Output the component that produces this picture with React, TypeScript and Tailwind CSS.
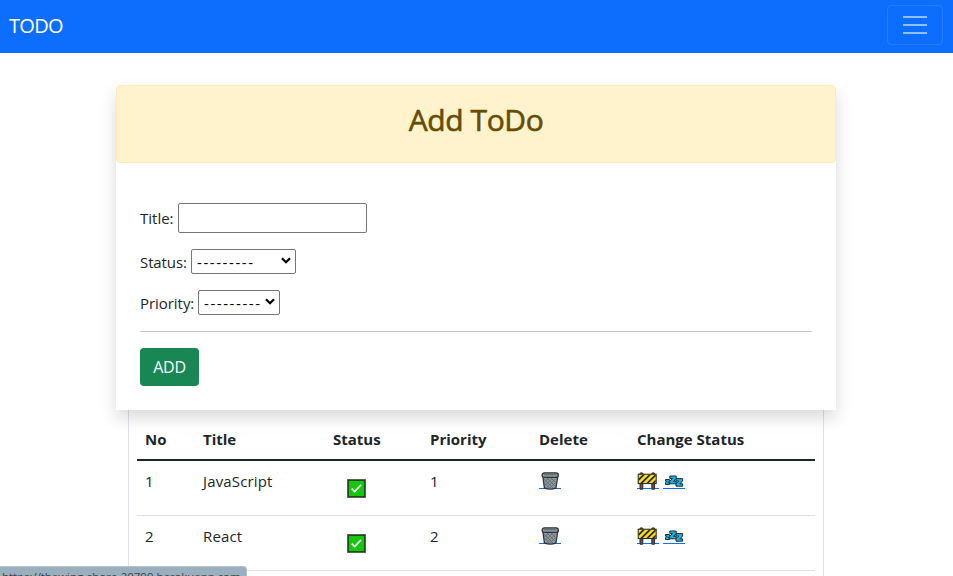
import React from 'react';

const todos = [
  { no: 1, title: 'JavaScript', priority: 1 },
  { no: 2, title: 'React', priority: 2 },
];

function CheckIcon() {
  return (
    <svg width="19" height="19" viewBox="0 0 19 19" className="block">
      <rect x="0.5" y="0.5" width="18" height="18" fill="#16c60c" stroke="#777" />
      <rect x="1.25" y="1.25" width="16.5" height="16.5" fill="none" stroke="#173d14" strokeWidth="1.2" />
      <path d="M4.7 9.7 7.6 12.5 14.2 5.7" fill="none" stroke="#fff" strokeWidth="1.6" />
    </svg>
  );
}

function BinIcon() {
  return (
    <svg width="22" height="20" viewBox="0 0 22 20" className="block">
      <path d="M0 16.5H22" stroke="#0d6efd" />
      <path d="M3.8 4 5.4 15.8Q11.3 18.6 17 15.8L18.8 4Z" fill="#8d9ba1" stroke="#333" strokeWidth="1.3" />
      <path d="m5 7 9 9M8 6l8 8M12 6l4.5 4.5M5.5 11l5 5M16.5 7l-9 9M13.5 6 6 13.5M9.5 6 5.5 10M16 11l-5 5" stroke="#59666c" strokeWidth="0.8" />
      <rect x="3.1" y="0.8" width="16.2" height="4.6" rx="2.2" fill="#8d9ba1" stroke="#333" strokeWidth="1.3" />
      <path d="M5 2.6H17.4" stroke="#65747b" strokeWidth="1.3" />
    </svg>
  );
}

function BarrierIcon() {
  return (
    <svg width="22" height="20" viewBox="0 0 22 20" className="block">
      <path d="M0 16.5H22" stroke="#0d6efd" />
      <path d="M3 1.2h2.8v16H3zM14.8 1.2h2.8v16h-2.8z" fill="#5a5052" stroke="#332d2f" />
      <path d="M3.6 .8h1.6M15.4 .8H17" stroke="#a93b32" strokeWidth="1.2" />
      <rect x="1.2" y="2.2" width="18" height="9.4" fill="#f8e018" stroke="#222" />
      <path d="m1.7 6.5 3.8-3.8H8L1.7 9zM3.3 11.1l8.4-8.4h2.5l-8.4 8.4zM9.3 11.1l8.4-8.4h1v1.5l-6.9 6.9zM15.1 11.1l3.6-3.6V10l-1.1 1.1z" fill="#292818" />
    </svg>
  );
}

function SleepIcon() {
  return (
    <svg width="22" height="20" viewBox="0 0 22 20" className="block">
      <path d="M0 16.5H22" stroke="#0d6efd" />
      <g fill="#10b5ea" stroke="#252b2e" strokeWidth="1">
        <path d="M2.5 7.5h4v1.7L5 10.8h1.5v1.7h-4v-1.7L4 9.2H2.5z" />
        <path d="M6.8 4h6.4v2.4L10.6 9.4h2.6v2.4H6.8V9.4l2.6-3H6.8z" />
        <path d="M13 6.6h6.6V9l-2.7 2.8h2.7v2.4H13v-2.4L15.7 9H13z" />
      </g>
    </svg>
  );
}

function Chevron() {
  return (
    <svg width="10" height="7" viewBox="0 0 10 7" className="mb-[2px] block">
      <path d="m1 1.2 4 4 4-4" fill="none" stroke="#000" strokeWidth="2.2" />
    </svg>
  );
}

function Picker({ className }: { className: string }) {
  return (
    <button className={`flex h-[25px] items-center justify-between rounded-[2px] border border-[#767676] bg-white pr-[4px] pl-[5px] text-black ${className}`}>
      <span className="pt-[2px] text-[15px] leading-none tracking-[1.57px]">---------</span>
      <Chevron />
    </button>
  );
}

export default function App() {
  return (
    <div className="relative flex h-[576px] w-[953px] flex-col overflow-hidden bg-white font-['Open_Sans','Noto_Sans',sans-serif] text-[15px] leading-6 text-[#212529]">
      <nav className="flex h-[53px] shrink-0 items-center justify-between bg-[#0d6efd] pr-[10px] pl-[9px]">
        <span className="pb-[2px] text-[20px] tracking-[-0.7px] text-white">TODO</span>
        <button aria-label="Menu" className="mb-[3px] flex h-10 w-14 flex-col items-center justify-center gap-[6px] rounded-[4px] border border-white/10">
          <span className="h-[2px] w-6 bg-white/55" />
          <span className="h-[2px] w-6 bg-white/55" />
          <span className="h-[2px] w-6 bg-white/55" />
        </button>
      </nav>

      <main className="mt-8 ml-[116px] w-[720px]">
        <section className="relative z-10 h-[325px] bg-white shadow-[0_8px_16px_rgba(0,0,0,0.15)]">
          <header className="flex h-[78px] justify-center rounded-[4px] border border-[#ffecb5] bg-[#fff3cd] pt-[15px]">
            <h1 className="text-[30px] leading-[38px] font-medium tracking-[-0.4px] text-[#664d03] [-webkit-text-stroke:0.6px_#664d03]">Add ToDo</h1>
          </header>
          <div className="px-6 pt-10">
            <div className="flex h-[30px] items-center">
              <label className="w-[38px] shrink-0 whitespace-nowrap">Title:</label>
              <input className="h-[30px] w-[189px] rounded-[2px] border border-[#767676] bg-white" />
            </div>
            <div className="mt-4 flex h-[25px] items-center">
              <label className="w-[51px] shrink-0 tracking-[-0.1px] whitespace-nowrap">Status:</label>
              <Picker className="w-[105px]" />
            </div>
            <div className="mt-4 flex h-[25px] items-center">
              <label className="w-[58px] shrink-0 tracking-[-0.05px] whitespace-nowrap">Priority:</label>
              <Picker className="w-[82px]" />
            </div>
            <hr className="mt-4 border-[#c8c9ca]" />
            <button className="mt-4 h-[38px] w-[59px] rounded-[4px] bg-[#198754] text-[16px] tracking-[-0.3px] text-white">ADD</button>
          </div>
        </section>

        <section className="ml-3 h-[200px] w-[696px] border-x border-[#dee2e6] px-2">
          <table className="w-[678px] table-fixed border-collapse text-left">
            <colgroup>
              <col className="w-[58px]" />
              <col className="w-[130px]" />
              <col className="w-[97px]" />
              <col className="w-[109px]" />
              <col className="w-[98px]" />
              <col className="w-[186px]" />
            </colgroup>
            <thead>
              <tr className="h-[50px] border-b-2 border-[#212529] font-bold">
                {['No', 'Title', 'Status', 'Priority', 'Delete', 'Change Status'].map((name) => (
                  <th key={name} className="px-2 pt-[8px] pb-0">{name}</th>
                ))}
              </tr>
            </thead>
            <tbody>
              {todos.map((todo) => (
                <tr key={todo.no} className="h-[55px] border-b border-[#dee2e6] align-top">
                  <td className="px-2 pt-2">{todo.no}</td>
                  <td className="px-2 pt-2 tracking-[0.15px]">{todo.title}</td>
                  <td className="pt-[18px] pl-[22px]"><CheckIcon /></td>
                  <td className="px-2 pt-2">{todo.priority}</td>
                  <td className="px-2 pt-[11px]"><BinIcon /></td>
                  <td className="px-2 pt-[11px]">
                    <div className="flex gap-[4px]"><BarrierIcon /><SleepIcon /></div>
                  </td>
                </tr>
              ))}
            </tbody>
          </table>
        </section>
      </main>

      <div className="absolute top-[566px] left-0 z-20 h-[10px] w-[247px] rounded-tr-[4px] border-t border-r border-[#b4c3cc] bg-[#9aafbd] pt-[1px] pl-[2px] text-[11.5px] leading-[18px] tracking-[-0.05px] whitespace-nowrap text-[#3c4347]">
        https://thawing-shore-20799.herokuapp.com
      </div>
    </div>
  );
}
